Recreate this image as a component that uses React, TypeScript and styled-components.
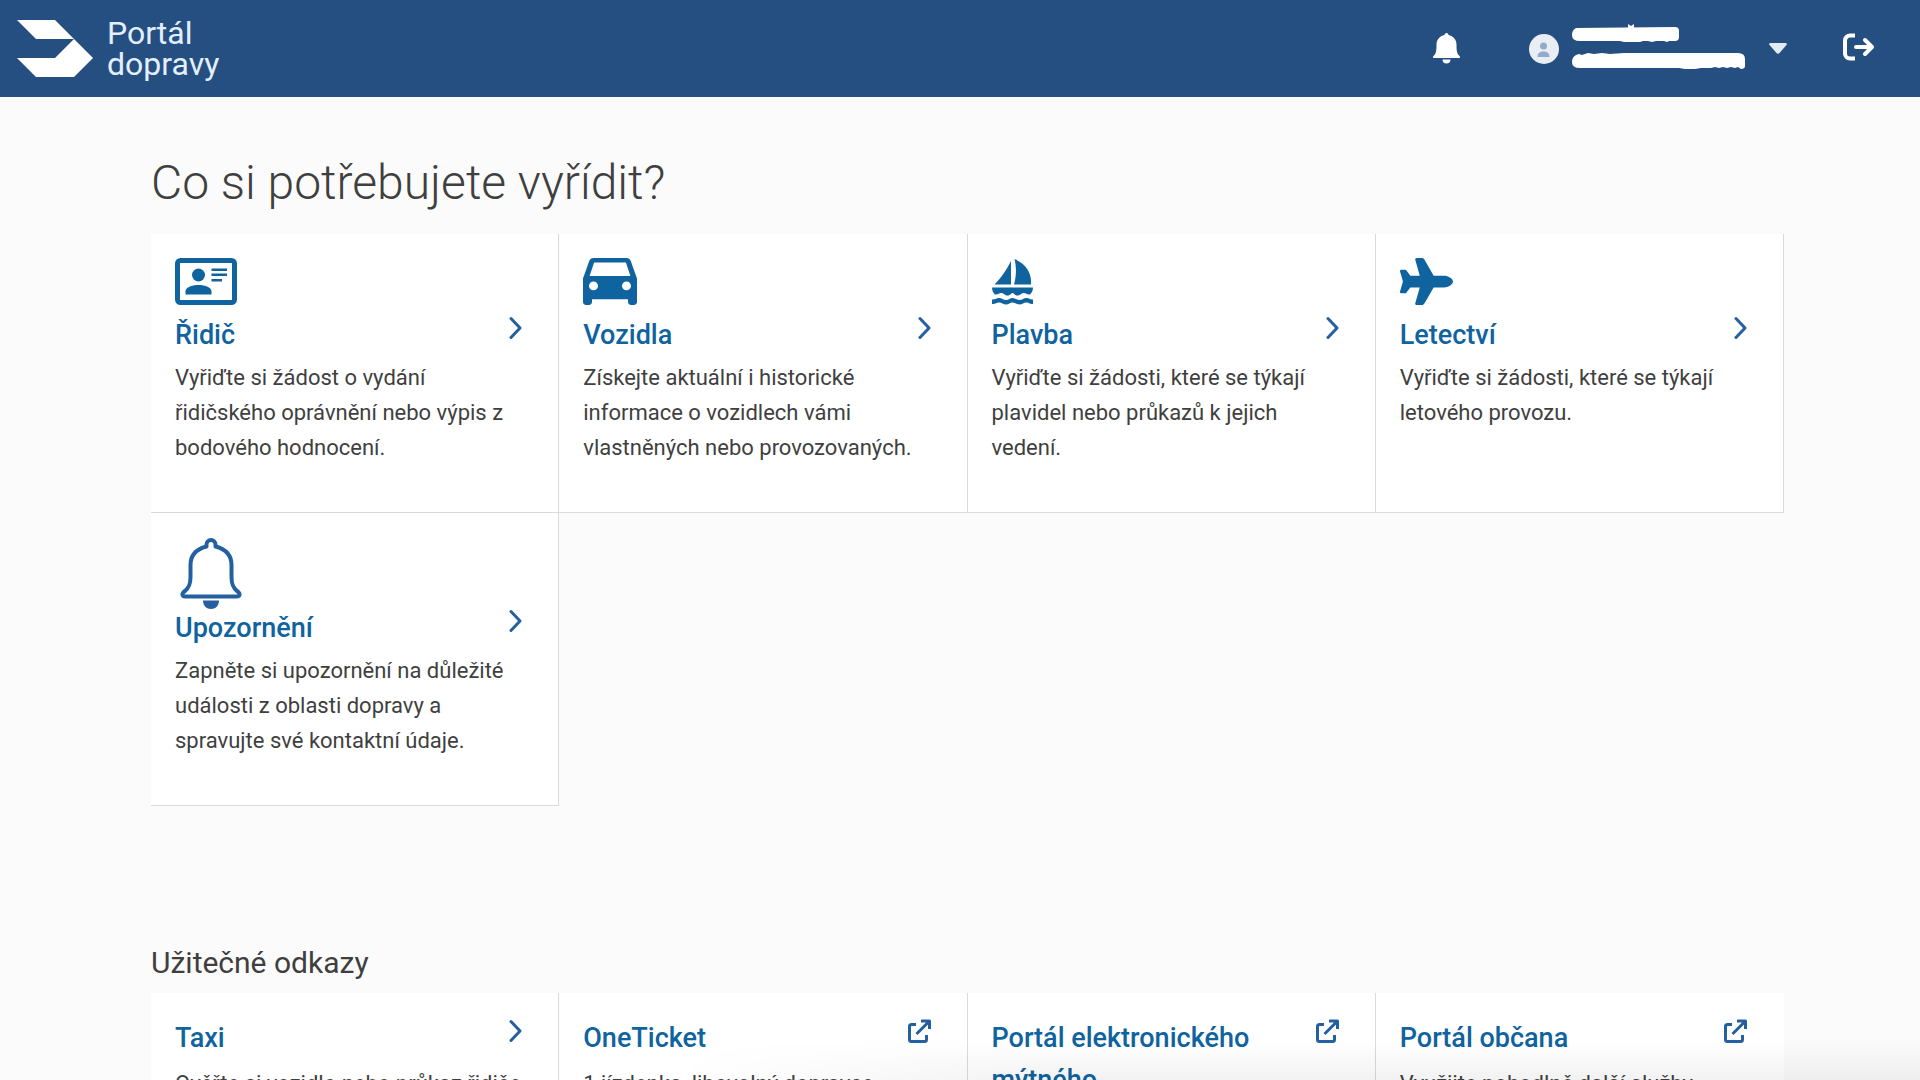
import React from "react";
import styled, { createGlobalStyle } from "styled-components";
import { FaPlane } from "react-icons/fa6";

const GlobalStyle = createGlobalStyle`
  * { box-sizing: border-box; }
  html, body { margin: 0; height: 100%; }
  body {
    background: #fbfbfb;
    color: #3f3f3f;
    font-family: Roboto, "Noto Sans", sans-serif;
    overflow: hidden;
  }
  a { color: inherit; text-decoration: none; }
`;

const Header = styled.header`
  display: flex;
  align-items: center;
  justify-content: space-between;
  height: 97px;
  padding: 0 45px 0 17px;
  background: #254f80;
  color: #fff;
`;

const Brand = styled.a`
  display: flex;
  align-items: center;
  gap: 14px;
  font-size: 32px;
  line-height: 31px;
  color: #e3efff;
`;

const BrandName = styled.span`
  width: min-content;
`;

const Tools = styled.div`
  display: flex;
  align-items: center;
`;

const ToolButton = styled.button`
  display: flex;
  align-items: center;
  padding: 0;
  border: 0;
  background: none;
  color: #fff;
  cursor: pointer;
`;

const UserButton = styled(ToolButton)`
  margin: 0 56px 0 69px;
`;

const HiddenName = styled.svg`
  margin: 0 24px 0 13px;
`;

const Main = styled.main`
  padding: 56px 136px 0 151px;
`;

const PageTitle = styled.h1`
  margin: 0 0 21px;
  font-size: 48px;
  line-height: 60px;
  font-weight: 300;
`;

const SectionTitle = styled.h2`
  margin: 137px 0 10px;
  font-size: 30px;
  line-height: 40px;
  font-weight: 400;
`;

const Grid = styled.div`
  display: grid;
  grid-template-columns: repeat(4, 1fr);
`;

const Card = styled.a<{ $open?: boolean }>`
  display: block;
  padding: 24px 36px 47px 24px;
  background: #fff;
  border-right: 1px solid ${(p) => (p.$open ? "transparent" : "#dadada")};
  border-bottom: 1px solid #dadada;
`;

const IconSlot = styled.div<{ $tall?: boolean }>`
  display: flex;
  align-items: flex-start;
  height: ${(p) => (p.$tall ? 70 : 56)}px;
  color: #0f639f;
`;

const TitleRow = styled.div`
  display: flex;
  justify-content: space-between;
  align-items: flex-start;
  gap: 16px;
`;

const CardTitle = styled.h3`
  margin: 0;
  color: #0f639f;
  font-size: 27px;
  line-height: 42px;
  font-weight: 500;
`;

const Arrow = styled.svg`
  flex: none;
  width: 24px;
  height: 24px;
  margin-top: 2px;
  fill: none;
  stroke: #2460a0;
  stroke-width: 3;
`;

const Description = styled.p<{ $gap?: number }>`
  margin: ${(p) => p.$gap ?? 4}px 0 0;
  font-size: 22px;
  line-height: 35px;
`;

const FooterFade = styled.div`
  position: fixed;
  inset: auto 0 0 0;
  height: 40px;
  background: linear-gradient(to bottom, rgba(0, 0, 0, 0), rgba(0, 0, 0, 0.05));
  mask-image: linear-gradient(to right, transparent 35%, #000 55%);
  pointer-events: none;
`;

const Chevron = () => (
  <Arrow viewBox="0 0 24 24" strokeLinecap="round" strokeLinejoin="round">
    <path d="M13 2.500 22 12l-9 9.500" />
  </Arrow>
);

const External = () => (
  <Arrow viewBox="0 0 24 24" strokeLinejoin="round">
    <path d="M9 5.500H4.500a2 2 0 0 0-2 2v13a2 2 0 0 0 2 2h13a2 2 0 0 0 2-2V16M9.500 15 22 2.500M14 2H22.500V10" />
  </Arrow>
);

const LicenceIcon = () => (
  <svg width="62" height="47" viewBox="0 0 62 47" fill="currentColor">
    <rect x="2.500" y="2.500" width="57" height="42" rx="3" fill="none" stroke="currentColor" strokeWidth="5" />
    <circle cx="23.500" cy="17" r="6.500" />
    <path d="M10.500 36.500v-3c0-4 6-6.500 13-6.500s13 2.500 13 6.500v3z" />
    <path d="M36.500 10.500H52v2.500H36.500zM36.500 15.500H52V18H36.500zM36.500 21h10.500v2.500H36.500z" />
  </svg>
);

const CarIcon = () => (
  <svg width="54" height="47" viewBox="3 5 18 16" preserveAspectRatio="none" fill="currentColor">
    <path d="M18.920 6.010C18.720 5.420 18.160 5 17.500 5h-11c-.66 0-1.210.42-1.420 1.010L3 12v8c0 .55.45 1 1 1h1c.55 0 1-.45 1-1v-1h12v1c0 .55.45 1 1 1h1c.55 0 1-.45 1-1v-8l-2.080-5.990zM6.500 16c-.83 0-1.500-.67-1.500-1.500S5.670 13 6.500 13s1.500.67 1.500 1.500S7.330 16 6.500 16zm11 0c-.83 0-1.500-.67-1.500-1.500s.67-1.500 1.500-1.500 1.500.67 1.500 1.500-.67 1.500-1.500 1.500zM5.200 11.100 6.700 6.500h10.600l1.500 4.600H5.200z" />
  </svg>
);

const SailIcon = () => (
  <svg width="42" height="47" viewBox="0 0 42 47" fill="currentColor">
    <path d="M19 3v23.500H2.500C9 20 14 13 19 3zM22.500 1C34 6 40 15 39 26.500H22C24.500 18 24.500 9 22.500 1z" />
    <path d="M0 29.500h41c0 3.500-1.500 5.500-3 7-3 .5-4-1.500-6-1.500-3 0-3.500 2.500-6.500 2.500S22 35 20.500 35s-2 2.500-5 2.500S12 35 9 35c-2 0-3 2-6 1.500-1.500-1.500-3-3.500-3-7z" />
    <path d="M0 41.500c4 0 4.500-1.500 7-1.500 3 0 4 2 7 2s4-2 6.500-2 4 2 7 2 4-2 7-2c2.500 0 3 1.500 6.500 1.500V46c-4 0-4-1.500-6.500-1.500-3 0-4 2-7 2s-4.500-2-7-2-3.500 2-6.500 2-4-2-7-2C4.500 44.500 4 46 0 46z" />
  </svg>
);

const PlaneIcon = styled(FaPlane)`
  width: 53px;
  height: 47px;
`;

const BellOutline = () => (
  <svg width="72" height="72" viewBox="0 0 72 72" fill="none" stroke="#2460a0" strokeWidth="4" strokeLinejoin="round">
    <path d="M31.500 9.500V7.500a4.500 4.500 0 0 1 9 0v2C50 12 56.500 18 56.500 28v12c0 8 2 11 5.500 14 3.500 2.500 3.500 5.500-.5 5.500h-51c-4 0-4-3-.5-5.500 3.500-3 5.500-6 5.500-14V28c0-10 6.500-16 16-18.500z" />
    <path d="M28 63.500h16c0 5-3.500 8.500-8 8.500S28 68.500 28 63.500z" fill="#2460a0" stroke="none" />
  </svg>
);

const services = [
  { title: "Řidič", text: "Vyřiďte si žádost o vydání řidičského oprávnění nebo výpis z bodového hodnocení.", icon: <LicenceIcon /> },
  { title: "Vozidla", text: "Získejte aktuální i historické informace o vozidlech vámi vlastněných nebo provozovaných.", icon: <CarIcon /> },
  { title: "Plavba", text: "Vyřiďte si žádosti, které se týkají plavidel nebo průkazů k jejich vedení.", icon: <SailIcon /> },
  { title: "Letectví", text: "Vyřiďte si žádosti, které se týkají letového provozu.", icon: <PlaneIcon preserveAspectRatio="none" /> },
  { title: "Upozornění", text: "Zapněte si upozornění na důležité události z oblasti dopravy a spravujte své kontaktní údaje.", icon: <BellOutline />, tall: true },
];

const links = [
  { title: "Taxi", text: "Ověřte si vozidlo nebo průkaz řidiče" },
  { title: "OneTicket", text: "1 jízdenka, libovolný dopravce", external: true },
  { title: "Portál elektronického mýtného", text: "", external: true },
  { title: "Portál občana", text: "Využijte pohodlně další služby", external: true },
];

export default function App() {
  return (
    <>
      <GlobalStyle />
      <Header>
        <Brand href="#">
          <svg width="76" height="57" viewBox="0 0 76 57" fill="#fff">
            <path d="M0 0h38l19 19h-38zM57 19l19 19-19 19H19L0 38h38z" />
          </svg>
          <BrandName>Portál dopravy</BrandName>
        </Brand>
        <Tools>
          <ToolButton aria-label="Upozornění">
            <svg width="27" height="32" viewBox="0 0 27 32" fill="currentColor">
              <path d="M11.500 2a2 2 0 0 1 4 0c5 1 8 5 8 9.500 0 7 .5 9 3 11.500 1 1 .5 2-.5 2H1c-1 0-1.500-1-.5-2C3 20.500 3.500 18.500 3.500 11.500c0-4.500 3-8.500 8-9.500zM9.500 26.500h8c0 2.500-1.500 4-4 4s-4-1.500-4-4z" />
            </svg>
          </ToolButton>
          <UserButton aria-label="Uživatel">
            <svg width="30" height="30" viewBox="0 0 30 30">
              <circle cx="15" cy="15" r="15" fill="#e9eef5" />
              <circle cx="14.500" cy="12" r="3.500" fill="#90abcb" />
              <path d="M8.500 23c0-4 2.500-5.500 6-5.500s6 1.500 6 5.500z" fill="#90abcb" />
            </svg>
            <HiddenName width="173" height="50" viewBox="0 0 173 50" fill="#fff">
              <path d="M4 4 103 3q4 0 4 4v6q0 4-4 4H97l-2 1-3-1h-8l-4 1-4-1h-5l-3 1H52l-4-1H8q-8 0-8-6 0-5 4-7zM56 0l3 2 3-2v4h-6zM4 31l3-1 3 1 6-2 6 1 8-1 8 1 14-1H166q7 0 7 6v7q0 3-4 3l-3-2-3 1-4-1-4 1-4-1-4 1-4-1-4 1h-10l-6 1h-10l-6-1H8q-8 0-8-6 0-5 4-7z" />
            </HiddenName>
            <svg width="18" height="11" viewBox="0 0 18 11" fill="#e3ebf5">
              <path d="M1.500 0h15q2 0 1 2l-7 8q-1.500 1.500-3 0l-7-8q-1-2 1-2z" />
            </svg>
          </UserButton>
          <ToolButton aria-label="Odhlásit">
            <svg width="32" height="32" viewBox="0 0 32 32" fill="none" stroke="currentColor" strokeWidth="4" strokeLinejoin="round">
              <path d="M12 2.500H7a5 5 0 0 0-5 5v13a5 5 0 0 0 5 5h5" />
              <path d="M13 14h16M22 7l7 7-7 7" strokeLinecap="round" />
            </svg>
          </ToolButton>
        </Tools>
      </Header>
      <Main>
        <PageTitle>Co si potřebujete vyřídit?</PageTitle>
        <Grid>
          {services.map((s) => (
            <Card href="#" key={s.title}>
              <IconSlot $tall={s.tall}>{s.icon}</IconSlot>
              <TitleRow>
                <CardTitle>{s.title}</CardTitle>
                <Chevron />
              </TitleRow>
              <Description>{s.text}</Description>
            </Card>
          ))}
        </Grid>
        <SectionTitle>Užitečné odkazy</SectionTitle>
        <Grid>
          {links.map((l, i) => (
            <Card href="#" key={l.title} $open={i === 3}>
              <TitleRow>
                <CardTitle>{l.title}</CardTitle>
                {l.external ? <External /> : <Chevron />}
              </TitleRow>
              {l.text && <Description $gap={7}>{l.text}</Description>}
            </Card>
          ))}
        </Grid>
      </Main>
      <FooterFade />
    </>
  );
}
